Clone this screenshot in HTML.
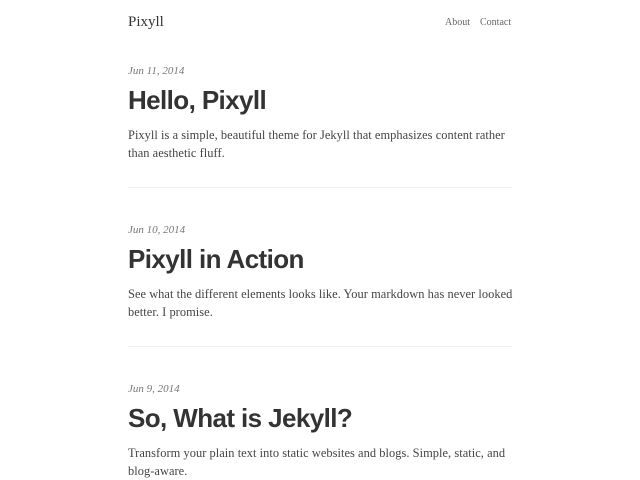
<!DOCTYPE html>
<html><head><meta charset="utf-8"><style>
body{margin:0;width:640px;height:480px;background:#fff;overflow:hidden;position:relative;color:#333}
.a{position:absolute;white-space:nowrap}
.logo{left:128px;top:14px;font:15px "Liberation Serif",serif;color:#333}
.nav{top:17px;font:10px "Liberation Serif",serif;color:#666}
.date{left:128px;font:italic 11px "Liberation Serif",serif;color:#777}
.t{left:128px;font:bold 26px "Liberation Sans",sans-serif;color:#333;letter-spacing:-0.6px}
.p{left:128px;font:12.4px/18px "Liberation Serif",serif;color:#444;letter-spacing:0.05px}
.hr{position:absolute;left:128px;width:384px;height:1px;background:#f2f2f2}
</style></head><body>
<div class="a logo">Pixyll</div>
<div class="a nav" style="left:445px">About</div>
<div class="a nav" style="left:480px">Contact</div>

<div class="a date" style="top:65px">Jun 11, 2014</div>
<div class="a t" style="top:85px">Hello, Pixyll</div>
<div class="a p" style="top:126px">Pixyll is a simple, beautiful theme for Jekyll that emphasizes content rather<br>than aesthetic fluff.</div>
<div class="hr" style="top:187px"></div>

<div class="a date" style="top:224px">Jun 10, 2014</div>
<div class="a t" style="top:244px">Pixyll in Action</div>
<div class="a p" style="top:285px">See what the different elements looks like. Your markdown has never looked<br>better. I promise.</div>
<div class="hr" style="top:346px"></div>

<div class="a date" style="top:383px">Jun 9, 2014</div>
<div class="a t" style="top:403px">So, What is Jekyll?</div>
<div class="a p" style="top:444px">Transform your plain text into static websites and blogs. Simple, static, and<br>blog-aware.</div>
</body></html>
